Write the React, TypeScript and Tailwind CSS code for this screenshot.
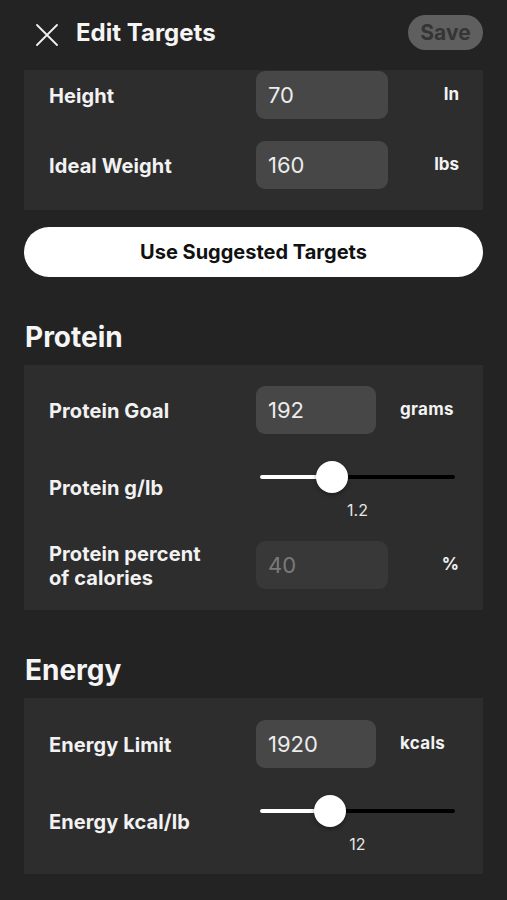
import React from "react";

const font = { fontFamily: "Inter, 'Noto Sans', sans-serif" };

function InputRow({
  label,
  value,
  unit,
  wide,
  disabled,
}: {
  label: React.ReactNode;
  value: string;
  unit: string;
  wide?: boolean;
  disabled?: boolean;
}) {
  return (
    <div className="flex items-center">
      <div className="w-[207px] shrink-0 relative top-[1px] text-[20px] font-bold leading-[24px] tracking-[0.1px] text-[#f2f2f2]">{label}</div>
      <div
        className={`${wide ? "w-[132px]" : "w-[120px]"} h-[48px] shrink-0 rounded-[9px] flex items-center pl-[12px] text-[22px] ${
          disabled ? "bg-[#383838] text-[#7a7a7a]" : "bg-[#474747] text-[#ececec]"
        }`}
      >
        {value}
      </div>
      {wide ? (
        <div className="flex-1 text-right text-[17px] font-bold text-[#f2f2f2]">{unit}</div>
      ) : (
        <div className="ml-6 text-[17px] font-bold tracking-[0.3px] text-[#f2f2f2]">{unit}</div>
      )}
    </div>
  );
}

function SliderRow({ label, value, thumbLeft }: { label: string; value: string; thumbLeft: number }) {
  return (
    <div className="flex items-start">
      <div className="w-[207px] shrink-0 mt-[15px] text-[20px] leading-[24px] font-bold tracking-[0.1px] text-[#f2f2f2]">
        {label}
      </div>
      <div className="w-[203px] flex flex-col">
        <div className="relative h-[32px] px-1">
          <div className="absolute left-1 right-1 top-[14px] h-[4px] rounded-full bg-black" />
          <div
            className="absolute left-1 top-[14px] h-[4px] rounded-full bg-white"
            style={{ width: thumbLeft }}
          />
          <div
            className="absolute top-0 h-[32px] w-[32px] rounded-full bg-white shadow-[0_2px_4px_rgba(0,0,0,0.35)]"
            style={{ left: thumbLeft - 16 + 4 }}
          />
        </div>
        <div className="mt-[7px] text-center text-[16px] leading-[20px] text-[#e6e6e6]">{value}</div>
      </div>
    </div>
  );
}

export default function App() {
  return (
    <div className="min-h-[900px] w-full bg-[#232323] text-white" style={font}>
      <div className="h-[70px] flex items-center pl-[36px] pr-[24px]">
        <svg width="22" height="22" viewBox="0 0 22 22" className="shrink-0">
          <path d="M1 1 L21 21 M21 1 L1 21" stroke="#f0f0f0" strokeWidth="1.8" strokeLinecap="round" />
        </svg>
        <div className="ml-[18px] text-[24px] font-bold text-[#f5f5f5] -mt-[4px]">Edit Targets</div>
        <div className="ml-auto -mt-[5px] h-[35px] w-[75px] rounded-full bg-[#5f5f5f] flex items-center justify-center text-[21px] font-bold text-[#353535]">
          Save
        </div>
      </div>

      <div className="mx-[24px] bg-[#2d2d2d] pl-[25px] pr-[24px] pt-[1px] pb-[21px] flex flex-col gap-[22px]">
        <InputRow label="Height" value="70" unit="In" wide />
        <InputRow label="Ideal Weight" value="160" unit="lbs" wide />
      </div>

      <div className="mx-[24px] mt-[17px] h-[50px] rounded-full bg-white flex items-center justify-center text-[20px] font-bold text-[#111]">
        Use Suggested Targets
      </div>

      <div className="ml-[25px] mt-[43px] h-[34px] flex items-center text-[28px] font-bold text-[#f5f5f5]">Protein</div>

      <div className="mx-[24px] mt-[11px] bg-[#2d2d2d] pl-[25px] pr-[24px] pt-[21px] pb-[21px] flex flex-col">
        <InputRow label="Protein Goal" value="192" unit="grams" />
        <div className="mt-[27px]">
          <SliderRow label="Protein g/lb" value="1.2" thumbLeft={72} />
        </div>
        <div className="mt-[21px]">
          <InputRow
            label={
              <>
                Protein percent
                <br />
                of calories
              </>
            }
            value="40"
            unit="%"
            wide
            disabled
          />
        </div>
      </div>

      <div className="ml-[25px] mt-[43px] h-[34px] flex items-center text-[28px] font-bold text-[#f5f5f5]">Energy</div>

      <div className="mx-[24px] mt-[11px] bg-[#2d2d2d] pl-[25px] pr-[24px] pt-[22px] pb-[20px] flex flex-col">
        <InputRow label="Energy Limit" value="1920" unit="kcals" />
        <div className="mt-[27px]">
          <SliderRow label="Energy kcal/lb" value="12" thumbLeft={70} />
        </div>
      </div>
    </div>
  );
}
